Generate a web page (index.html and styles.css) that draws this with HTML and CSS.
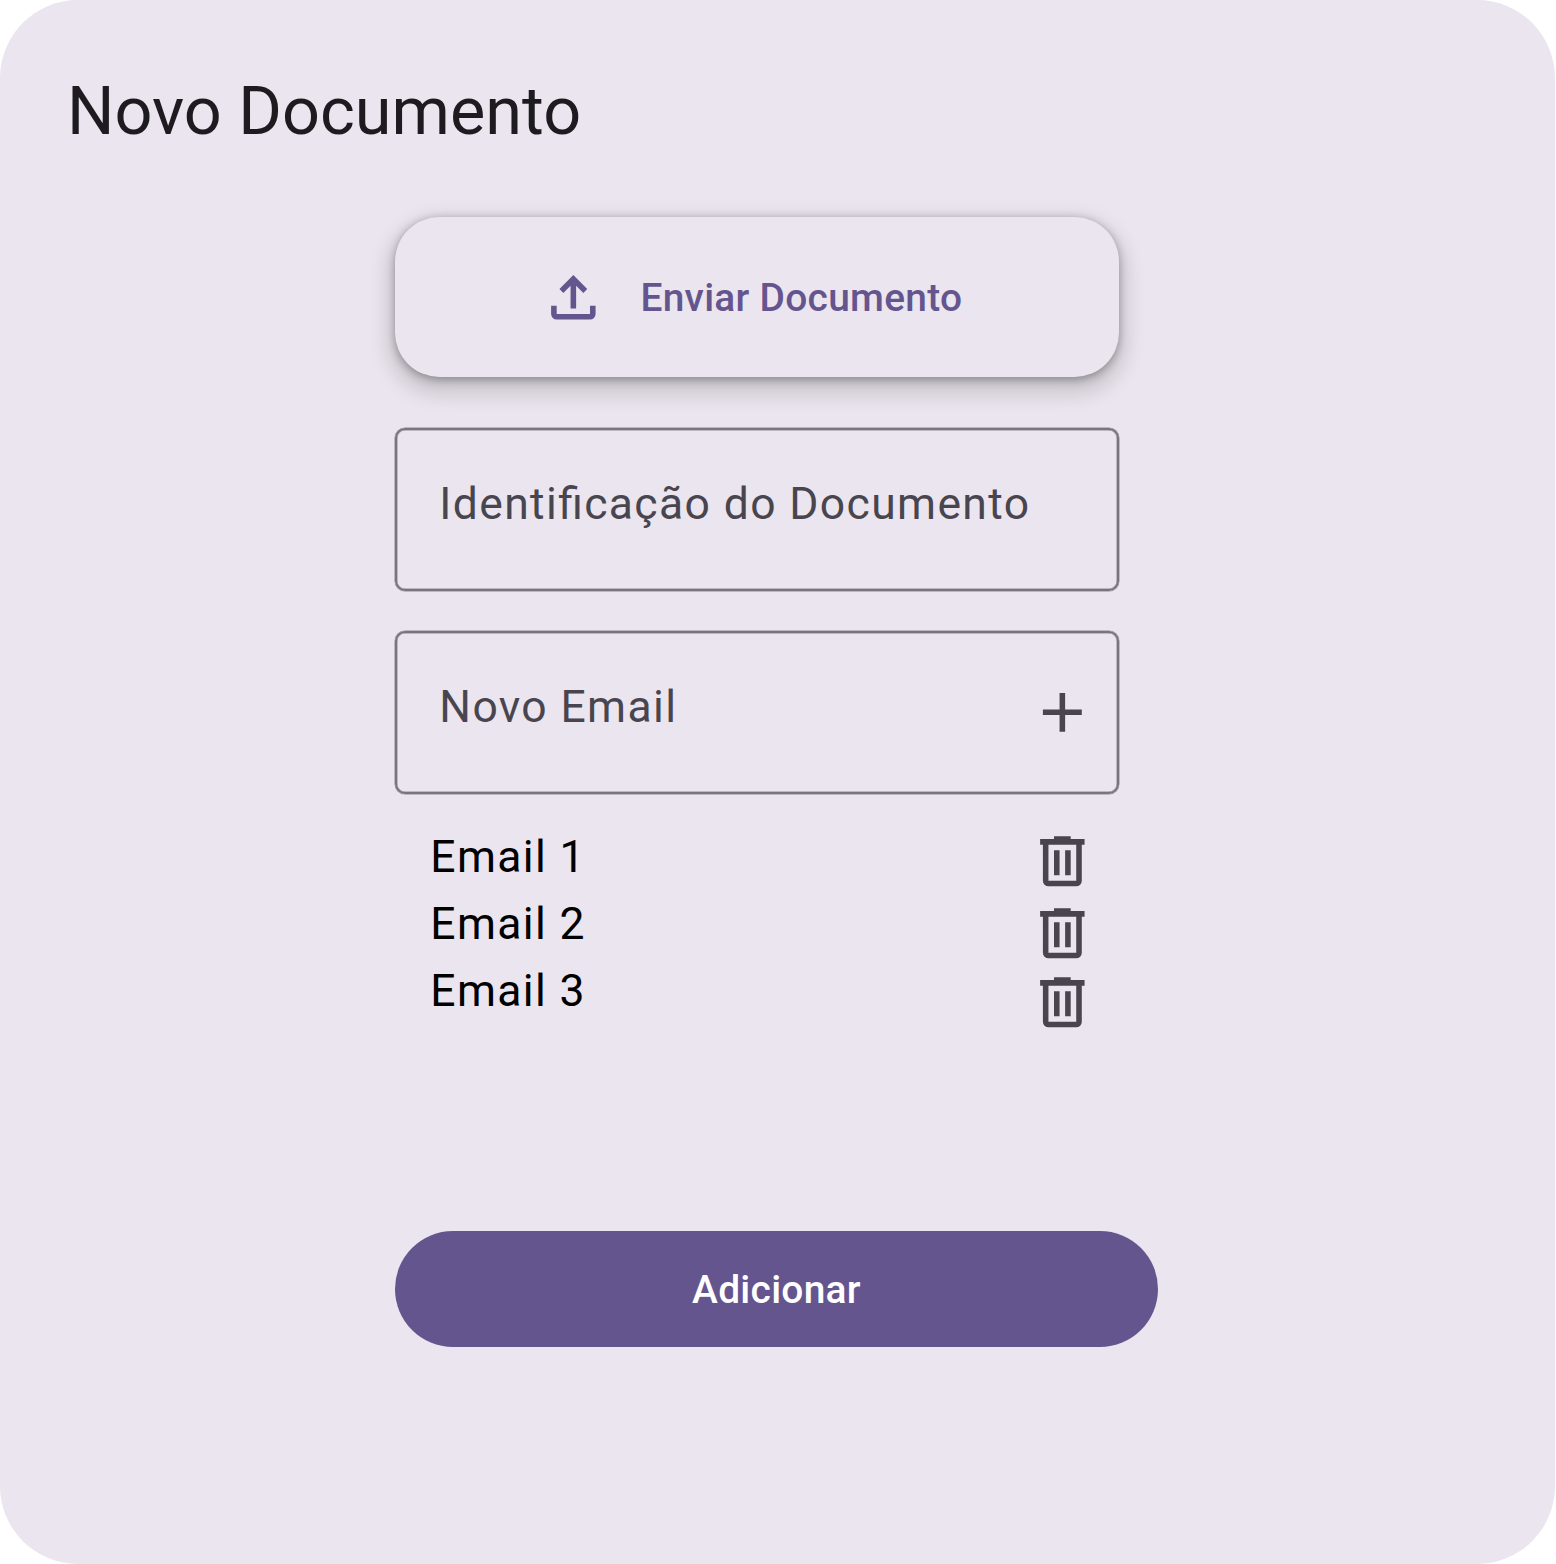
FILE: index.html
```html
<!DOCTYPE html>
<html lang="pt-BR">
<head>
<meta charset="utf-8">
<title>Novo Documento</title>
<link rel="stylesheet" href="styles.css">
</head>
<body>
<svg class="sprite" aria-hidden="true">
  <symbol id="trash" viewBox="0 0 24 24"><path fill-rule="evenodd" d="M9 3h6v1h5v2h-1v13a2 2 0 0 1-2 2H7a2 2 0 0 1-2-2V6H4V4h5zM7 6v13h10V6zM9 8h2v9H9zM13 8h2v9h-2z"/></symbol>
</svg>
<main class="dialog">
  <h1 class="title">Novo Documento</h1>
  <form class="form">
    <button type="button" class="upload">
      <svg class="icon" viewBox="0 0 24 24"><path d="M11 16V7.85l-2.6 2.6L7 9l5-5 5 5-1.4 1.45-2.6-2.6V16zM6 20a2 2 0 0 1-2-2v-3h2v3h12v-3h2v3a2 2 0 0 1-2 2z"/></svg>
      <span class="caption">Enviar Documento</span>
    </button>
    <div class="field">
      <span class="label">Identificação do Documento</span>
    </div>
    <div class="field">
      <span class="label">Novo Email</span>
      <svg class="icon" viewBox="0 0 24 24"><path d="M11 5h2v6h6v2h-6v6h-2v-6H5v-2h6z"/></svg>
    </div>
    <div class="emails">
      <ul class="names">
        <li>Email 1</li>
        <li>Email 2</li>
        <li>Email 3</li>
      </ul>
      <div class="actions">
        <svg class="icon"><use href="#trash"/></svg>
        <svg class="icon"><use href="#trash"/></svg>
        <svg class="icon"><use href="#trash"/></svg>
      </div>
    </div>
    <button type="button" class="submit">Adicionar</button>
  </form>
</main>
</body>
</html>
```
FILE: styles.css
```css
* { box-sizing: border-box; }
body {
  margin: 0;
  background: #fff;
  font-family: Roboto, "Liberation Sans", sans-serif;
}
.sprite { display: none; }
.dialog {
  width: 1555px;
  height: 1563.5px;
  padding: 67px 0 0 67px;
  border-radius: 78px;
  background: #eae5ee;
}
.title {
  margin: 0;
  font-size: 66.6px;
  font-weight: 400;
  line-height: 88px;
  color: #1d1b20;
}
.form {
  display: flex;
  flex-direction: column;
  width: 724px;
  margin: 62px 0 0 328px;
}
button {
  border: 0;
  padding: 0;
  font: 500 38.9px/55.6px Roboto, "Liberation Sans", sans-serif;
  letter-spacing: 0.28px;
}
.icon {
  display: block;
  flex: none;
  width: 66.7px;
  height: 66.7px;
  fill: currentColor;
}
.upload {
  display: flex;
  align-items: center;
  justify-content: center;
  gap: 33.6px;
  height: 160px;
  padding-right: 11.5px;
  border-radius: 44.5px;
  background: #eae5ee;
  color: #65558f;
  box-shadow: 0 2.8px 8px rgba(0, 0, 0, .3), 0 9.5px 20px 7px rgba(0, 0, 0, .14);
}
.caption { padding-top: 2px; }
.field {
  display: flex;
  align-items: center;
  justify-content: space-between;
  height: 163px;
  margin-top: 51px;
  padding: 0 21.3px 0 42.3px;
  border: 2px solid #79747e;
  border-radius: 10px;
  box-shadow: 0 0 0 0.5px rgba(121, 116, 126, .8), inset 0 0 0 0.5px rgba(121, 116, 126, .8);
  color: #49454f;
}
.field + .field { margin-top: 40px; }
.label {
  margin-top: -10px;
  font-size: 44.45px;
  line-height: 66.7px;
  letter-spacing: 1.38px;
  font-feature-settings: "liga" 1;
}
.emails {
  display: flex;
  justify-content: space-between;
  height: 201px;
  margin-top: 30px;
  padding: 0 23px 0 35.3px;
}
.names {
  margin: 0;
  padding: 0;
  list-style: none;
  font-size: 44.45px;
  line-height: 67px;
  letter-spacing: 1.38px;
  color: #000;
}
.actions {
  display: flex;
  flex-direction: column;
  gap: 5.3px;
  margin-top: 4px;
  color: #49454f;
}
.actions .icon:last-child { margin-top: -2.5px; }
.submit {
  width: 763px;
  height: 116px;
  margin-top: 206px;
  padding-top: 2px;
  border-radius: 58px;
  background: #65558f;
  color: #fff;
}
```
